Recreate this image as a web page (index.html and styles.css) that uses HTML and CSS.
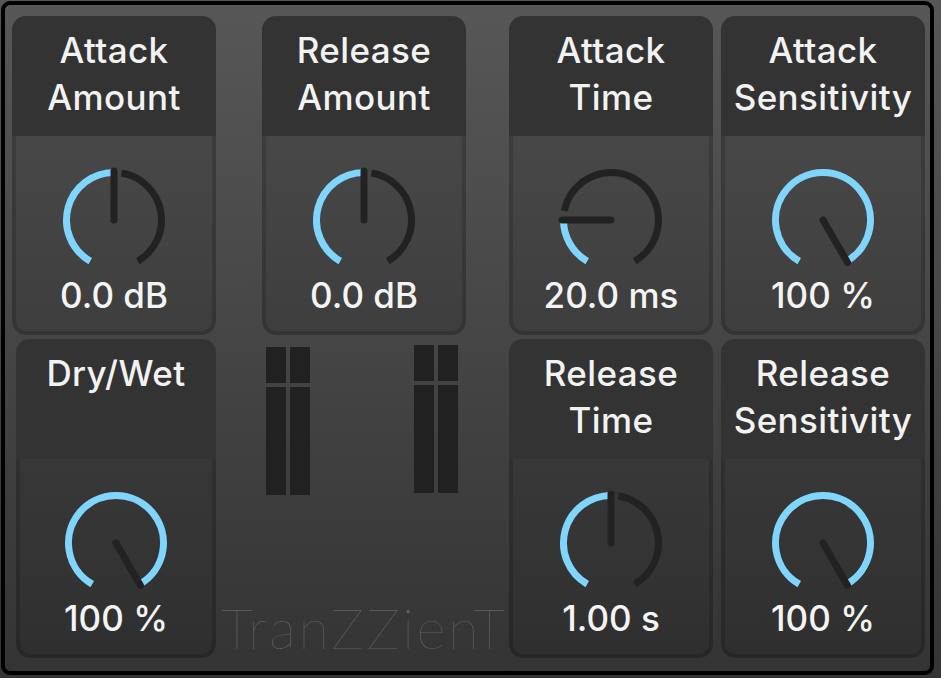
FILE: index.html
```html
<!DOCTYPE html>
<html>
<head>
<meta charset="utf-8">
<link rel="stylesheet" href="styles.css">
</head>
<body>
<div class="device">
  <div class="col">
    <div class="card">
      <div class="head">Attack<br>Amount</div>
      <div class="body">
        <svg class="knob" viewBox="0 0 110 110" width="110" height="110">
          <path class="on" d="M31.25 96.14 A47.5 47.5 0 0 1 55 7.5"/>
          <path class="off" d="M62.43 8.08 A47.5 47.5 0 0 1 78.75 96.14"/>
          <line class="needle" x1="55" y1="55" x2="55" y2="6"/>
        </svg>
        <div class="val">0.0 dB</div>
      </div>
    </div>
    <div class="card card-narrow">
      <div class="head">Dry/Wet</div>
      <div class="body">
        <svg class="knob" viewBox="0 0 110 110" width="110" height="110">
          <path class="on" d="M31.25 96.14 A47.5 47.5 0 1 1 78.75 96.14"/>
          <line class="needle" x1="55" y1="55" x2="79.5" y2="97.4"/>
        </svg>
        <div class="val">100 %</div>
      </div>
    </div>
  </div>

  <div class="col col-mid">
    <div class="card">
      <div class="head">Release<br>Amount</div>
      <div class="body">
        <svg class="knob" viewBox="0 0 110 110" width="110" height="110">
          <path class="on" d="M31.25 96.14 A47.5 47.5 0 0 1 55 7.5"/>
          <path class="off" d="M62.43 8.08 A47.5 47.5 0 0 1 78.75 96.14"/>
          <line class="needle" x1="55" y1="55" x2="55" y2="6"/>
        </svg>
        <div class="val">0.0 dB</div>
      </div>
    </div>
    <div class="meters">
      <div class="meter">
        <div class="bar"><span class="seg-top"></span><span class="seg-bot"></span></div>
        <div class="bar"><span class="seg-top"></span><span class="seg-bot"></span></div>
      </div>
      <div class="meter meter-right">
        <div class="bar"><span class="seg-top"></span><span class="seg-bot"></span></div>
        <div class="bar"><span class="seg-top"></span><span class="seg-bot"></span></div>
      </div>
    </div>
  </div>

  <div class="quad">
    <div class="card">
      <div class="head">Attack<br>Time</div>
      <div class="body">
        <svg class="knob" viewBox="0 0 110 110" width="110" height="110">
          <path class="on" d="M31.25 96.14 A47.5 47.5 0 0 1 7.5 55"/>
          <path class="off" d="M8.37 45.94 A47.5 47.5 0 1 1 78.75 96.14"/>
          <line class="needle" x1="55" y1="55" x2="6" y2="55"/>
        </svg>
        <div class="val">20.0 ms</div>
      </div>
    </div>
    <div class="card">
      <div class="head">Attack<br>Sensitivity</div>
      <div class="body">
        <svg class="knob" viewBox="0 0 110 110" width="110" height="110">
          <path class="on" d="M31.25 96.14 A47.5 47.5 0 1 1 78.75 96.14"/>
          <line class="needle" x1="55" y1="55" x2="79.5" y2="97.4"/>
        </svg>
        <div class="val">100 %</div>
      </div>
    </div>
    <div class="card">
      <div class="head">Release<br>Time</div>
      <div class="body">
        <svg class="knob" viewBox="0 0 110 110" width="110" height="110">
          <path class="on" d="M31.25 96.14 A47.5 47.5 0 0 1 55 7.5"/>
          <path class="off" d="M62.43 8.08 A47.5 47.5 0 0 1 78.75 96.14"/>
          <line class="needle" x1="55" y1="55" x2="55" y2="6"/>
        </svg>
        <div class="val">1.00 s</div>
      </div>
    </div>
    <div class="card">
      <div class="head">Release<br>Sensitivity</div>
      <div class="body">
        <svg class="knob" viewBox="0 0 110 110" width="110" height="110">
          <path class="on" d="M31.25 96.14 A47.5 47.5 0 1 1 78.75 96.14"/>
          <line class="needle" x1="55" y1="55" x2="79.5" y2="97.4"/>
        </svg>
        <div class="val">100 %</div>
      </div>
    </div>
  </div>

  <div class="brand">TranZZienT</div>
</div>
</body>
</html>
```

FILE: styles.css
```css
html, body {
  margin: 0;
  padding: 0;
}
body {
  width: 941px;
  height: 678px;
  overflow: hidden;
  background: linear-gradient(#575757, #343434);
  font-family: "Inter", "Open Sans", sans-serif;
}
.device {
  position: relative;
  box-sizing: border-box;
  margin: 1px 0 0 1px;
  width: 933px;
  height: 674px;
  border: 4px solid #000;
  border-radius: 9px;
  background: linear-gradient(#575757, #343434);
  padding: 11px 0 0 7px;
  display: flex;
  align-items: flex-start;
}
.col {
  display: flex;
  flex-direction: column;
  gap: 4px;
  width: 204px;
}
.col-mid {
  margin-left: 46px;
}
.quad {
  margin-left: 43px;
  display: grid;
  grid-template-columns: 204px 204px;
  grid-auto-rows: 319px;
  column-gap: 8px;
  row-gap: 4px;
}
.card {
  display: flex;
  flex-direction: column;
  width: 204px;
  height: 319px;
  border-radius: 14px;
  overflow: hidden;
}
.card-narrow {
  width: 200px;
  margin-left: 4px;
}
.head {
  flex: none;
  height: 120px;
  box-sizing: border-box;
  background: #333333;
  color: #f2f2f2;
  font-size: 35px;
  font-weight: 500;
  line-height: 47px;
  text-align: center;
  padding-top: 11px;
  letter-spacing: 0.4px;
}
.body {
  flex: 1;
  display: flex;
  flex-direction: column;
  align-items: center;
  border: 4px solid rgba(0, 0, 0, 0.25);
  border-top: 0;
  border-radius: 0 0 14px 14px;
  background: rgba(0, 0, 0, 0.1);
  background-clip: padding-box;
  padding-top: 29px;
}
.knob {
  display: block;
  flex: none;
}
.knob path {
  fill: none;
  stroke-width: 7;
}
.knob .on {
  stroke: #80d5fc;
}
.knob .off {
  stroke: #222222;
}
.knob .needle {
  stroke: #222222;
  stroke-width: 7;
  stroke-linecap: round;
}
.val {
  color: #f4f4f4;
  font-size: 35px;
  font-weight: 500;
  line-height: 40px;
  margin-top: 0;
  letter-spacing: 0;
}
.meters {
  height: 319px;
  display: flex;
  justify-content: space-between;
  align-items: flex-start;
  padding: 8px 8px 0 4px;
  box-sizing: border-box;
}
.meter {
  display: flex;
  gap: 4px;
}
.meter-right {
  margin-top: -2px;
}
.bar {
  width: 20px;
  display: flex;
  flex-direction: column;
  gap: 4px;
}
.seg-top {
  display: block;
  height: 36px;
  background: #212121;
}
.seg-bot {
  display: block;
  height: 108px;
  background: #212121;
}
.brand {
  position: absolute;
  left: 216px;
  top: 599px;
  height: 47px;
  font-family: "Lato", sans-serif;
  font-weight: 200;
  font-size: 56px;
  line-height: 47px;
  letter-spacing: 2.6px;
  color: #636363;
  white-space: nowrap;
}
```
